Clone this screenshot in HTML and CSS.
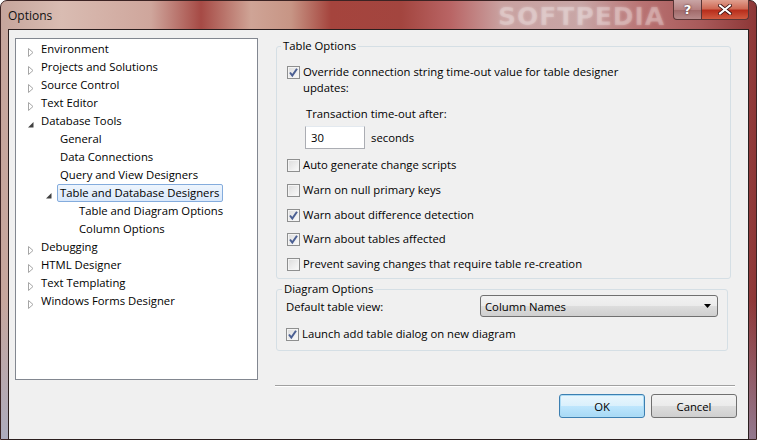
FILE: index.html
```html
<!DOCTYPE html>
<html>
<head>
<meta charset="utf-8">
<title>Options</title>
<link rel="stylesheet" href="styles.css">
</head>
<body>
<div class="window">
    <div class="titlebar">
        <span class="title">Options</span>
        <span class="mark">SOFTPEDIA</span>
        <div class="capbtns">
            <span class="capbtn help">?</span>
            <span class="capbtn close">
                <svg width="14" height="11" viewBox="0 0 14 11"><path d="M2 1.5 L12 9.5 M12 1.5 L2 9.5" stroke="#3a1010" stroke-width="3.6" stroke-linecap="square"/><path d="M2 1.5 L12 9.5 M12 1.5 L2 9.5" stroke="#fff" stroke-width="2" stroke-linecap="square"/></svg>
            </span>
        </div>
    </div>
    <div class="client">
        <div class="tree">
            <div class="node l1"><span class="arr"><svg width="6" height="9" viewBox="0 0 6 9"><path d="M0.5 0.5 L5 4.5 L0.5 8.5 Z" fill="#fff" stroke="#a6a6a6"/></svg></span>Environment</div>
            <div class="node l1"><span class="arr"><svg width="6" height="9" viewBox="0 0 6 9"><path d="M0.5 0.5 L5 4.5 L0.5 8.5 Z" fill="#fff" stroke="#a6a6a6"/></svg></span>Projects and Solutions</div>
            <div class="node l1"><span class="arr"><svg width="6" height="9" viewBox="0 0 6 9"><path d="M0.5 0.5 L5 4.5 L0.5 8.5 Z" fill="#fff" stroke="#a6a6a6"/></svg></span>Source Control</div>
            <div class="node l1"><span class="arr"><svg width="6" height="9" viewBox="0 0 6 9"><path d="M0.5 0.5 L5 4.5 L0.5 8.5 Z" fill="#fff" stroke="#a6a6a6"/></svg></span>Text Editor</div>
            <div class="node l1"><span class="arr"><svg width="6" height="9" viewBox="0 0 6 9"><path d="M5.5 2 L5.5 7.5 L0 7.5 Z" fill="#404040"/></svg></span>Database Tools</div>
            <div class="node l2">General</div>
            <div class="node l2">Data Connections</div>
            <div class="node l2">Query and View Designers</div>
            <div class="node l2"><span class="arr"><svg width="6" height="9" viewBox="0 0 6 9"><path d="M5.5 2 L5.5 7.5 L0 7.5 Z" fill="#404040"/></svg></span><span class="sel">Table and Database Designers</span></div>
            <div class="node l3">Table and Diagram Options</div>
            <div class="node l3">Column Options</div>
            <div class="node l1"><span class="arr"><svg width="6" height="9" viewBox="0 0 6 9"><path d="M0.5 0.5 L5 4.5 L0.5 8.5 Z" fill="#fff" stroke="#a6a6a6"/></svg></span>Debugging</div>
            <div class="node l1"><span class="arr"><svg width="6" height="9" viewBox="0 0 6 9"><path d="M0.5 0.5 L5 4.5 L0.5 8.5 Z" fill="#fff" stroke="#a6a6a6"/></svg></span>HTML Designer</div>
            <div class="node l1"><span class="arr"><svg width="6" height="9" viewBox="0 0 6 9"><path d="M0.5 0.5 L5 4.5 L0.5 8.5 Z" fill="#fff" stroke="#a6a6a6"/></svg></span>Text Templating</div>
            <div class="node l1"><span class="arr"><svg width="6" height="9" viewBox="0 0 6 9"><path d="M0.5 0.5 L5 4.5 L0.5 8.5 Z" fill="#fff" stroke="#a6a6a6"/></svg></span>Windows Forms Designer</div>
        </div>
        <div class="pane">
            <fieldset class="group tableopts">
                <legend>Table Options</legend>
                <div class="row first">
                    <span class="cb on"><svg width="11" height="11" viewBox="0 0 11 11"><path d="M2 5.5 L4.3 8.5 L9 1.8" fill="none" stroke="#4b5f93" stroke-width="2"/></svg></span>
                    <span class="lbl">Override connection string time-out value for table designer<br>updates:</span>
                </div>
                <div class="sub">Transaction time-out after:</div>
                <div class="timeout">
                    <span class="edit">30</span>
                    <span>seconds</span>
                </div>
                <div class="row"><span class="cb"></span><span class="lbl">Auto generate change scripts</span></div>
                <div class="row"><span class="cb"></span><span class="lbl">Warn on null primary keys</span></div>
                <div class="row"><span class="cb on"><svg width="11" height="11" viewBox="0 0 11 11"><path d="M2 5.5 L4.3 8.5 L9 1.8" fill="none" stroke="#4b5f93" stroke-width="2"/></svg></span><span class="lbl">Warn about difference detection</span></div>
                <div class="row"><span class="cb on"><svg width="11" height="11" viewBox="0 0 11 11"><path d="M2 5.5 L4.3 8.5 L9 1.8" fill="none" stroke="#4b5f93" stroke-width="2"/></svg></span><span class="lbl">Warn about tables affected</span></div>
                <div class="row"><span class="cb"></span><span class="lbl">Prevent saving changes that require table re-creation</span></div>
            </fieldset>
            <fieldset class="group diagram">
                <legend>Diagram Options</legend>
                <div class="viewrow">
                    <span>Default table view:</span>
                    <span class="combo">Column Names<svg width="7" height="4" viewBox="0 0 7 4"><path d="M0 0 L7 0 L3.5 4 Z" fill="#000"/></svg></span>
                </div>
                <div class="row launch"><span class="cb on"><svg width="11" height="11" viewBox="0 0 11 11"><path d="M2 5.5 L4.3 8.5 L9 1.8" fill="none" stroke="#4b5f93" stroke-width="2"/></svg></span><span class="lbl">Launch add table dialog on new diagram</span></div>
            </fieldset>
            <div class="sep"></div>
            <div class="buttons">
                <span class="btn ok">OK</span>
                <span class="btn">Cancel</span>
            </div>
        </div>
    </div>
</div>
</body>
</html>
```

FILE: styles.css
```css
*{margin:0;padding:0;box-sizing:border-box}
body{
    width:757px;
    height:440px;
    overflow:hidden;
    font-family:"Open Sans","Noto Sans",sans-serif;
    font-size:11.3px;
    color:#000;
}
.window{
    width:757px;
    height:440px;
    padding:0 7px 7px 7px;
    border:1px solid #3c2323;
    border-radius:7px 7px 0 0;
    background:
        linear-gradient(to bottom, rgba(255,255,255,0) 0, rgba(255,255,255,0) 300px, rgba(150,175,215,.55) 440px),
        linear-gradient(to right, #c6a59c 0, #d9bcb2 60px, #cfa69c 150px, #a64a45 200px, #cfa496 250px, #c79585 290px, #a5443d 330px, #a3453f 400px, #b96565 450px, #c9a1a0 500px, #c8a6a6 580px, #b97373 640px, #a85a5a 700px, #8c3535 757px);
}
.titlebar{
    height:28px;
    display:flex;
    align-items:flex-start;
    position:relative;
}
.title{
    padding:6px 0 0 0;
    font-size:12px;
    color:#111;
    flex:1;
}
.mark{
    position:absolute;
    left:490px;
    top:1px;
    font-family:"DejaVu Sans",sans-serif;
    font-weight:bold;
    font-size:25px;
    letter-spacing:1px;
    color:rgba(255,255,255,.2);
    text-shadow:0 0 3px rgba(255,255,255,.3);
}
.capbtns{
    display:flex;
    margin-top:-1px;
}
.capbtn{
    display:flex;
    align-items:center;
    justify-content:center;
    height:20px;
    border:1px solid #5a3535;
    border-top:0;
}
.help{
    width:29px;
    border-radius:0 0 0 4px;
    background:linear-gradient(#c9a5a5, #b58080 50%, #a06868 51%, #b78a8a);
    color:#fff;
    font-family:"DejaVu Sans",sans-serif;
    font-weight:bold;
    font-size:13px;
    text-shadow:0 0 2px #3a1515;
}
.close{
    width:47px;
    border-left:0;
    border-radius:0 0 4px 0;
    background:linear-gradient(#e0a090, #cf6a55 45%, #b82e1c 55%, #d05a40);
}
.client{
    display:flex;
    height:411px;
    background:#f0f0f0;
    border:1px solid #2a1e1e;
    padding:8px 0 0 6px;
}
.tree{
    width:243px;
    height:342px;
    padding-top:1px;
    background:#fff;
    border:1px solid #828790;
}
.node{
    position:relative;
    height:18px;
    line-height:18px;
    white-space:nowrap;
}
.l1{padding-left:25px}
.l2{padding-left:44px}
.l3{padding-left:63px}
.arr{
    position:absolute;
    top:4px;
}
.l1 .arr{left:12px}
.l2 .arr{left:30px;top:3px}
.sel{
    display:inline-block;
    height:18px;
    line-height:16px;
    margin-left:-3px;
    padding:0 3px 0 2px;
    border:1px solid #84acdd;
    border-radius:2px;
    background:linear-gradient(#eef5fd, #d9e8fb);
}
.pane{
    width:462px;
    margin-left:17px;
}
.group{
    margin-left:1px;
    border:1px solid #d5dfe5;
    border-radius:3px;
}
.group legend{
    margin-left:-6px;
    padding:0 2px;
    line-height:16px;
}
.tableopts{
    width:455px;
    padding:10px 10px 6px 10px;
}
.row{
    display:flex;
    align-items:flex-start;
    margin-top:8.75px;
    line-height:16px;
}
.row.first{margin-top:0}
.cb{
    flex:none;
    width:13px;
    height:13px;
    margin-top:2px;
    margin-right:3px;
    border:1px solid #8e8f8f;
    background:linear-gradient(135deg, #dcdcdc, #fbfbfb);
    box-shadow:inset 0 0 0 1px #f4f4f4;
}
.cb svg{display:block}
.sub{
    margin:10px 0 0 19px;
    line-height:16px;
}
.timeout{
    display:flex;
    align-items:center;
    margin:4px 0 0 18px;
}
.edit{
    width:60px;
    height:23px;
    line-height:21px;
    padding-left:5px;
    margin-right:6px;
    background:#fff;
    border:1px solid #abadb3;
    border-top-color:#e3e9ef;
}
.timeout + .row{margin-top:8px}
.diagram{
    width:452px;
    margin-top:4px;
    padding:0 9px 8px 9px;
}
.diagram legend{
    line-height:12px;
    margin-left:-4px;
    margin-top:2px;
}
.viewrow{
    display:flex;
    align-items:center;
    justify-content:space-between;
}
.combo{
    display:flex;
    align-items:center;
    justify-content:space-between;
    width:238px;
    height:22px;
    padding:0 6px 0 4px;
    border:1px solid #707070;
    border-radius:3px;
    background:linear-gradient(#f2f2f2, #ebebeb 50%, #dddddd 51%, #cfcfcf);
}
.launch{margin-top:9px}
.sep{
    width:460px;
    margin-top:34px;
    border-top:1px solid #a0a0a0;
    border-bottom:1px solid #fff;
}
.buttons{
    display:flex;
    justify-content:flex-end;
    gap:6px;
    margin-top:7px;
}
.btn{
    display:flex;
    align-items:center;
    justify-content:center;
    width:86px;
    height:24px;
    border:1px solid #707070;
    border-radius:3px;
    background:linear-gradient(#f2f2f2, #ebebeb 50%, #dddddd 51%, #cfcfcf);
}
.btn.ok{
    border-color:#3c7fb1;
    background:linear-gradient(#eaf6fd, #d9f0fc 50%, #bee6fd 51%, #a7d9f5);
    box-shadow:inset 0 0 0 1px #aedcf5;
}
```
